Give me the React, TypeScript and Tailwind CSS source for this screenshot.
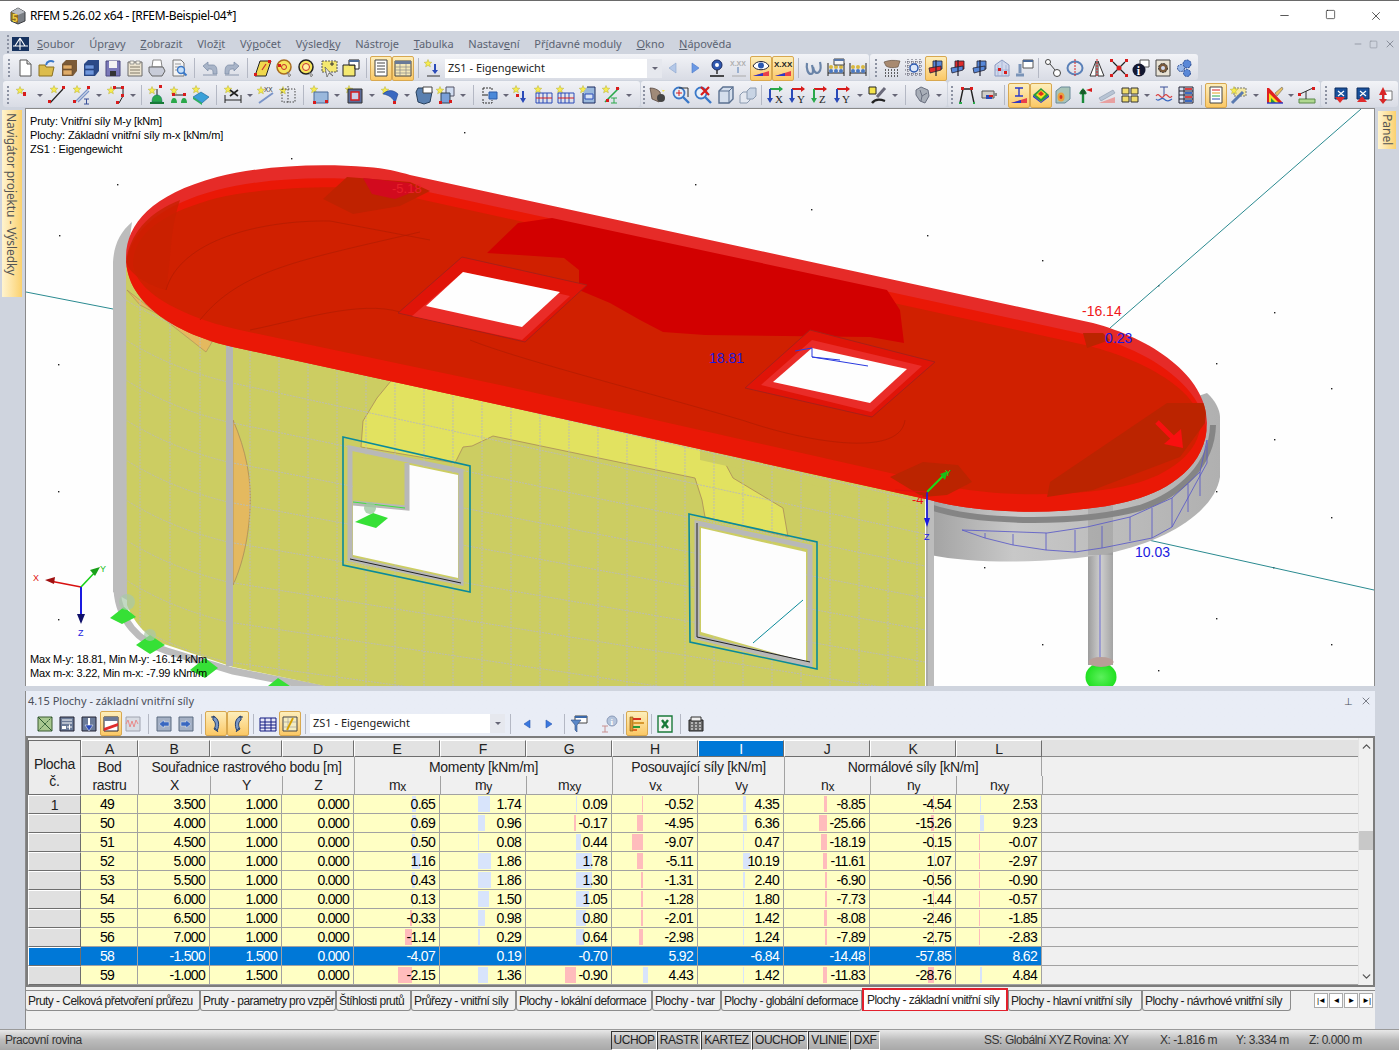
import type { ReactNode } from "react";
import { Minus, Square, X, ChevronUp, ChevronDown } from "lucide-react";

const star = (x = 0, y = 0) => (
  <path
    transform={`translate(${x} ${y})`}
    d="M4 .5l1 2.6 2.8.2-2.1 1.8.7 2.7L4 6.4 1.6 7.8l.7-2.7L.2 3.3 3 3.1z"
    fill="#f7ec4e"
    stroke="#b5ae3a"
    strokeWidth=".5"
  />
);
const dot = (x: number, y: number, c = "#d81c1c") => <rect x={x} y={y} width="3" height="3" fill={c} />;
const abacus = (
  <>
    <path d="M2 5v13M18 5v13M2 15h16" stroke="#222" fill="none" />
    <circle cx="5" cy="13" r="2" fill="#4a78c0" />
    <circle cx="10" cy="13" r="2" fill="#4a78c0" />
    <circle cx="15" cy="13" r="2" fill="#4a78c0" />
    <circle cx="5" cy="9" r="2" fill="#d8b840" />
    <circle cx="10" cy="9" r="2" fill="#d8b840" />
    <circle cx="15" cy="9" r="2" fill="#d8b840" />
  </>
);
const bluePlaneRed = (
  <>
    <path d="M2 18l16-5v5z" fill="#e8404a" />
    <path d="M2 18l10-3v3z" fill="#2a3ac8" />
  </>
);
const cross = (c1: string, c2: string) => (
  <>
    <path d="M7 3h9v8l-9 1z" fill={c1} stroke="#223" strokeWidth=".8" />
    <path d="M3 10l12-2v4L4 15z" fill={c2} stroke="#223" strokeWidth=".8" />
    <path d="M10 2v16" stroke="#223" strokeWidth="1.2" />
  </>
);
const magnifier = (
  <>
    <circle cx="8" cy="8" r="5.5" fill="#e8f0f8" stroke="#3a78c8" strokeWidth="1.8" />
    <path d="M12 12l6 6" stroke="#3a78c8" strokeWidth="2.4" />
  </>
);
const axis = (a: string, b: string, label: string) => (
  <>
    <path d="M4 4h12" stroke={a} strokeWidth="2" />
    <path d="M13 1l4 3-4 3z" fill={a} />
    <path d="M4 4v12" stroke={b} strokeWidth="2" />
    <path d="M1 13l3 5 3-5z" fill={b} />
    <text x="9" y="18" fontSize="11" fontFamily="Liberation Serif" fill="#222">
      {label}
    </text>
  </>
);
const boxArrow = (up: boolean) => (
  <>
    <path d="M4 3h12v11H4z" fill="#18509c" stroke="#0c2c60" />
    <path d="M7 6l6 5M13 6l-6 5" stroke="#fff" strokeWidth="1.2" />
    <path d={up ? "M9 11l-5 6h10z" : "M4 12h10l-5 6z"} fill="#e02c2c" />
  </>
);

const icons: Record<string, ReactNode> = {
  new: (
    <>
      <path d="M5 2h7l4 4v12H5z" fill="#fff" stroke="#555" />
      <path d="M12 2v4h4" fill="#ddd" stroke="#555" />
    </>
  ),
  open: (
    <>
      <path d="M2 7h6l1 2h8l-2 9H2z" fill="#dcbc4c" stroke="#8a7020" />
      <path d="M9 7c1-4 5-5 8-3" stroke="#3a78c8" fill="none" strokeWidth="2" />
    </>
  ),
  cabT: (
    <>
      <path d="M3 6l4-4h11v11l-4 5H3z" fill="#7a5a38" />
      <path d="M4 7h9v4H4zM4 12h9v5H4z" fill="#e0ac68" stroke="#6a4a28" strokeWidth=".6" />
    </>
  ),
  cabB: (
    <>
      <path d="M3 6l4-4h11v11l-4 5H3z" fill="#2c4a88" />
      <path d="M4 7h9v4H4zM4 12h9v5H4z" fill="#6e96dc" stroke="#223c78" strokeWidth=".6" />
    </>
  ),
  save: (
    <>
      <path d="M3 3h14v15H3z" fill="#7a78b8" stroke="#4a4880" />
      <path d="M6 3h8v7H6z" fill="#f2f2f2" />
      <path d="M7 13h6v5H7z" fill="#333" />
    </>
  ),
  notes: (
    <>
      <path d="M3 4h14v14H3z" fill="#ece4d0" stroke="#6a6a6a" />
      <path d="M5 3h4v3H5zM11 3h4v3h-4z" fill="#f8f4e8" stroke="#777" strokeWidth=".7" />
      <path d="M5 9h10M5 12h10M5 15h10" stroke="#807868" />
    </>
  ),
  print: (
    <>
      <path d="M6 2h8l1 7H5z" fill="#fff" stroke="#888" />
      <path d="M2 9h14l2 4-3 5H5l-3-4z" fill="#c8ccd8" stroke="#666" />
    </>
  ),
  preview: (
    <>
      <path d="M4 2h8l3 3v13H4z" fill="#f4f4f4" stroke="#777" />
      <path d="M6 6h6M6 9h6M6 12h3" stroke="#999" />
      <circle cx="12" cy="12" r="3.5" fill="#c8e0f8" stroke="#3a78c8" strokeWidth="1.4" />
      <path d="M14.5 14.5l3 3" stroke="#3a78c8" strokeWidth="2" />
    </>
  ),
  undo: (
    <>
      <path d="M3 8l5-4v3h5c3 0 4 3 4 7v2h-4v-2c0-2-1-3-3-3H8v2z" fill="#a8b4c8" stroke="#7a8aa4" strokeWidth=".7" />
      <path d="M3 17h14" stroke="#8a96ac" />
    </>
  ),
  redo: (
    <>
      <path d="M17 8l-5-4v3H7c-3 0-4 3-4 7v2h4v-2c0-2 1-3 3-3h2v2z" fill="#a8b4c8" stroke="#7a8aa4" strokeWidth=".7" />
      <path d="M3 17h14" stroke="#8a96ac" />
    </>
  ),
  plane: (
    <>
      <path d="M7 3h11l-5 15H2z" fill="#f0d84c" stroke="#222" />
      {dot(1, 15)}
      {dot(15, 2)}
      <path d="M9 12l4-6" stroke="#c83030" strokeWidth="1.2" />
    </>
  ),
  view1: (
    <>
      <circle cx="9" cy="9" r="7" fill="#f6e45c" stroke="#a86c20" strokeWidth="1.5" />
      <circle cx="9" cy="9" r="2.5" fill="none" stroke="#c83030" />
      <path d="M12 14l2 5 2-2z" fill="#bbb" stroke="#666" strokeWidth=".6" />
      {dot(3, 6)}
    </>
  ),
  view2: (
    <>
      <circle cx="9" cy="9" r="7" fill="#f6e45c" stroke="#222" strokeWidth="1.5" />
      <circle cx="9" cy="9" r="3.5" fill="#fff0a0" stroke="#c83030" />
      <path d="M12 14l2 5 2-2z" fill="#bbb" stroke="#666" strokeWidth=".6" />
    </>
  ),
  sel: (
    <>
      <path d="M3 3h15v11H3z" fill="#f4e870" stroke="#555" strokeDasharray="2 1" />
      <path d="M6 9l2 10 2-4 4 3z" fill="#eee" stroke="#555" strokeWidth=".7" />
      <path d="M11 6h4M13 4v4" stroke="#333" />
    </>
  ),
  wins: (
    <>
      <path d="M2 7h12v11H2z" fill="#f4e870" stroke="#222" />
      <path d="M8 2h10v9h-4V7H8z" fill="#fff" stroke="#222" />
      <path d="M8 2h10v2H8z" fill="#4a6a98" />
    </>
  ),
  list: (
    <>
      <path d="M4 2h12v16H4z" fill="#fff" stroke="#444" />
      <path d="M6 5h8M6 8h8M6 11h8M6 14h8" stroke="#444" />
    </>
  ),
  table: (
    <>
      <path d="M2 3h16v15H2z" fill="#f4e8b8" stroke="#444" />
      <path d="M2 3h16v3H2z" fill="#6a7a98" />
      <path d="M2 9h16M2 12h16M2 15h16M7 6v12M13 6v12" stroke="#888" strokeWidth=".7" />
    </>
  ),
  load: (
    <>
      {star(1, 1)}
      <path d="M12 6v8" stroke="#2a4ab8" strokeWidth="2" />
      <path d="M9 12l3 4 3-4z" fill="#2a4ab8" />
      <path d="M4 18h13" stroke="#333" />
    </>
  ),
  arrL: <path d="M13 5v10l-7-5z" fill="#b4c8e8" stroke="#8aa4cc" strokeWidth=".6" />,
  arrR: <path d="M7 5v10l7-5z" fill="#6a98e4" stroke="#4a78c8" strokeWidth=".6" />,
  tArrL: <path d="M13 6v8l-6-4z" fill="#3a78e0" stroke="#2a58b0" strokeWidth=".6" />,
  tArrR: <path d="M7 6v8l6-4z" fill="#3a78e0" stroke="#2a58b0" strokeWidth=".6" />,
  pin: (
    <>
      <circle cx="10" cy="7" r="5" fill="#3058b0" stroke="#1a2a60" />
      <circle cx="10" cy="7" r="2" fill="#fff" />
      <path d="M10 12v4" stroke="#222" strokeWidth="1.4" />
      <path d="M3 18h14" stroke="#222" strokeWidth="1.6" />
    </>
  ),
  xx: (
    <>
      <text x="1" y="8" fontSize="7" fontFamily="Liberation Sans" fontWeight="700" fill="#b0b0b0">
        X.XX
      </text>
      <path d="M9 9v6" stroke="#9ab0d0" strokeWidth="2" />
      <path d="M3 18h14" stroke="#aaa" />
    </>
  ),
  eye: (
    <>
      <path d="M2 8c3-6 13-6 16 0-3 5-13 5-16 0z" fill="#fff" stroke="#223" />
      <circle cx="10" cy="7.5" r="3" fill="#2a58b0" />
      {bluePlaneRed}
    </>
  ),
  xxh: (
    <>
      <text x="1" y="9" fontSize="8" fontFamily="Liberation Sans" fontWeight="700" fill="#222">
        X.XX
      </text>
      {bluePlaneRed}
    </>
  ),
  chain: (
    <path
      d="M3 5c-1 6 1 11 4 11s2-5 1-9M9 9c1 6 4 7 6 5s2-6 1-10"
      fill="none"
      stroke="#6a84a8"
      strokeWidth="2.2"
    />
  ),
  ab1: (
    <>
      {abacus}
      <path d="M8 1h10v6H8z" fill="#f4f4f4" stroke="#444" />
      <path d="M8 1h10v2H8z" fill="#5a78a8" />
    </>
  ),
  ab2: abacus,
  hand: (
    <>
      <path d="M2 4c5-2 10-2 16-1l-2 6c-5 1-9 1-12-1z" fill="#a88a70" stroke="#5a4a3a" strokeWidth=".6" />
      <path d="M3 12h1M6 12h1M9 12h1M12 12h1M15 12h1M3 15h1M6 15h1M9 15h1M12 15h1M15 15h1M3 18h1M6 18h1M9 18h1M12 18h1M15 18h1" stroke="#333" strokeWidth="1.4" />
    </>
  ),
  gridT: (
    <>
      <path d="M1 4h18M1 8h18M1 12h18M1 16h18M4 1v18M8 1v18M12 1v18M16 1v18" stroke="#334" strokeWidth=".8" strokeDasharray="1 1" />
      <circle cx="10" cy="10" r="4" fill="#dce8fa" stroke="#2a58b0" strokeWidth="1.4" />
    </>
  ),
  crossA: cross("#5888d8", "#e02c2c"),
  crossB: cross("#e02c2c", "#5888d8"),
  crossC: cross("#5888d8", "#5888d8"),
  build: (
    <>
      <path d="M3 18V7l7-5 7 5v11z" fill="#d0d8ec" stroke="#8a9ac0" />
      <path d="M3 12h14M10 3v15M6 7v11M14 7v11" stroke="#9aaad0" strokeWidth=".7" />
      {dot(6, 10)}
      {dot(12, 13)}
    </>
  ),
  link: (
    <>
      <path d="M9 2h10v8H9z" fill="#fff" stroke="#555" />
      <path d="M9 2h10v2H9z" fill="#4a6a98" />
      <path d="M6 6v9" stroke="#7a94b8" strokeWidth="3" />
      <path d="M2 17h8" stroke="#7a94b8" strokeWidth="3" />
    </>
  ),
  conn: (
    <>
      <circle cx="5" cy="4" r="2.5" fill="#fff" stroke="#444" />
      <circle cx="14" cy="15" r="3.5" fill="#fff" stroke="#444" />
      <path d="M7 6l5 6" stroke="#444" />
    </>
  ),
  circ: (
    <>
      <ellipse cx="10" cy="10" rx="7.5" ry="6.5" fill="none" stroke="#5a80b8" strokeWidth="2" />
      <path d="M10 1v18" stroke="#d82020" strokeDasharray="2 1" />
    </>
  ),
  tri: (
    <>
      <path d="M9 3L3 18h6zM11 3l6 15h-6z" fill="#fff" stroke="#333" />
      <path d="M10 1v18" stroke="#d82020" strokeDasharray="2 1" />
    </>
  ),
  redx: (
    <>
      <path d="M4 4l12 12M16 4L4 16" stroke="#222" strokeWidth="1.2" />
      <circle cx="10" cy="10" r="2.5" fill="#d81c1c" />
      {dot(1, 1)}
      {dot(16, 1)}
      {dot(1, 16)}
      {dot(16, 16)}
    </>
  ),
  info: (
    <>
      <path d="M9 2h9v7H9z" fill="#fff" stroke="#555" />
      <circle cx="8" cy="12" r="6.5" fill="#141830" />
      <text x="5.8" y="17" fontSize="12" fontFamily="Liberation Serif" fontWeight="700" fill="#fff">
        i
      </text>
    </>
  ),
  gearbox: (
    <>
      <path d="M3 2h14v16H3z" fill="#e8e2d4" stroke="#444" />
      <circle cx="10" cy="10" r="4.5" fill="#7a5a3a" stroke="#333" strokeDasharray="2 1" />
      <circle cx="10" cy="10" r="2" fill="#d0d8ec" />
    </>
  ),
  gears: (
    <>
      <circle cx="12" cy="6" r="4" fill="#5a88d8" stroke="#2a4a90" strokeDasharray="2 1" />
      <circle cx="6" cy="10" r="3.5" fill="#9ab8e8" stroke="#2a4a90" strokeDasharray="2 1" />
      <circle cx="12" cy="15" r="3.5" fill="#5a88d8" stroke="#2a4a90" strokeDasharray="2 1" />
    </>
  ),
  node: (
    <>
      {star(3, 1)}
      {dot(10, 7)}
      <path d="M10 8h3v3h-3z" fill="#d81c1c" />
    </>
  ),
  line: (
    <>
      {star(3, 0)}
      <path d="M3 18L16 4" stroke="#222" strokeWidth="1.2" />
      {dot(1, 15)}
      {dot(15, 1)}
    </>
  ),
  lineI: (
    <>
      {star(1, 0)}
      <path d="M3 17L17 3M6 17L17 6" stroke="#7a94c8" strokeWidth="1.2" />
      {dot(1, 15)}
      {dot(15, 1)}
      <path d="M12 14h5M14.5 14v5M12 19h5" stroke="#3a5098" />
    </>
  ),
  poly: (
    <>
      {star(1, 1)}
      <path d="M7 3h10v8l-4 7" fill="none" stroke="#222" />
      {dot(7, 1)}
      {dot(15, 1)}
      {dot(15, 9)}
      {dot(10, 16)}
    </>
  ),
  sup: (
    <>
      {star(1, 1)}
      {dot(12, 0)}
      <path d="M10 4v6" stroke="#222" />
      <path d="M5 17c0-5 2-7 5-7s5 2 5 7z" fill="#2aa84a" stroke="#166" strokeWidth=".5" />
      <path d="M3 17h14v2H3z" fill="#187a38" />
    </>
  ),
  nodes2: (
    <>
      {star(1, 1)}
      <path d="M5 10h11" stroke="#222" />
      {dot(3, 8)}
      {dot(14, 8)}
      <path d="M2 18c0-3 1-5 3-5s3 2 3 5zM12 18c0-3 1-5 3-5s3 2 3 5z" fill="#2aa84a" />
    </>
  ),
  surf: (
    <>
      {star(1, 0)}
      <path d="M2 12l8-5 8 5-7 6z" fill="#3aa0d8" stroke="#186090" strokeWidth=".6" />
      <path d="M2 12l9 6v2l-9-6z" fill="#2ab060" />
    </>
  ),
  dim: (
    <>
      {star(1, 0)}
      <path d="M2 10v8M18 10v8M2 15h16" stroke="#222" />
      <path d="M7 5l8 6M15 5l-8 6" stroke="#222" strokeWidth="1.6" />
    </>
  ),
  dimX: (
    <>
      {star(1, 1)}
      <path d="M3 18L17 8" stroke="#7a94c8" strokeWidth="2" />
      <text x="8" y="7" fontSize="6.5" fontFamily="Liberation Sans" fill="#333">
        XX
      </text>
    </>
  ),
  dimD: (
    <>
      {star(1, 1)}
      <path d="M4 4h13v13H4z" fill="none" stroke="#444" strokeDasharray="1.5 1.5" />
      <path d="M10 1v18" stroke="#444" strokeDasharray="1.5 1.5" />
    </>
  ),
  box: (
    <>
      {star(0, 0)}
      <path d="M4 7h14v11H4z" fill="#9ab8dc" stroke="#4a6a98" />
      {dot(15, 15)}
      {dot(3, 16)}
    </>
  ),
  boxred: (
    <>
      {star(0, 0)}
      <path d="M3 4h14v14H3z" fill="#5a6a98" stroke="#333" />
      <path d="M6 7h8v8H6z" fill="#c8d0e8" stroke="#d81c1c" strokeWidth="1.4" />
    </>
  ),
  curved: (
    <>
      {star(0, 1)}
      <path d="M2 9c5-5 11-4 15 0l-3 9c-2-5-6-8-12-9z" fill="#3a68c0" stroke="#1a3a80" strokeWidth=".5" />
      {dot(12, 16)}
    </>
  ),
  solid: (
    <>
      <path d="M4 3h12l2 4-2 10-6 2-6-2-2-10z" fill="#5a80b0" stroke="#28405c" />
      <path d="M9 2h9v6H9z" fill="#fff" stroke="#444" />
    </>
  ),
  copy: (
    <>
      {star(0, 1)}
      <path d="M10 2h8v9h-8z" fill="#d0dcf0" stroke="#556" />
      <path d="M5 8h9v10H5z" fill="#7aa0d8" stroke="#345" />
      {dot(13, 15)}
      {dot(3, 16)}
    </>
  ),
  arrBox: (
    <>
      <path d="M3 3h9v3M3 3v6M3 14v4h9v-3" fill="none" stroke="#333" strokeDasharray="2 1" />
      <path d="M9 7h8v7H9z" fill="#4a88d8" stroke="#2a5aa8" />
      <path d="M2 10h6" stroke="#222" />
    </>
  ),
  ldown: (
    <>
      {star(1, 0)}
      <path d="M12 6v9" stroke="#2a4ab8" strokeWidth="2" />
      <path d="M9 13l3 5 3-5z" fill="#2a4ab8" />
      {dot(5, 9)}
    </>
  ),
  abS: (
    <>
      {star(0, 0)}
      <path d="M2 8h16v10H2z" fill="none" stroke="#2a4ab8" />
      <path d="M5 8v10M9 8v10M13 8v10" stroke="#2a4ab8" />
      <path d="M2 13h16" stroke="#d81c1c" />
    </>
  ),
  abT: (
    <>
      {star(0, 0)}
      <path d="M8 2h8v16H4V8" fill="#9ab8dc" stroke="#1a2a60" />
      <path d="M6 9h8v5H6z" fill="#d8e4f4" stroke="#2a4ab8" />
    </>
  ),
  yLine: (
    <>
      {star(0, 0)}
      <path d="M3 17L17 3" stroke="#2aa84a" strokeWidth="1.6" />
      {dot(14, 2)}
      {dot(4, 14)}
      <path d="M9 13h6M12 13v5M9 18h6" stroke="#2aa84a" />
    </>
  ),
  hand2: (
    <>
      <path d="M2 3c4 0 7 1 10 4 1 4 1 8-1 10l-7-3z" fill="#a08a78" stroke="#4a3a30" strokeWidth=".7" />
      <circle cx="13" cy="13" r="4" fill="#444" />
      <path d="M13 2l1 3 3 0-2 2 1 3" fill="#f4e44c" />
    </>
  ),
  zoom1: (
    <>
      {magnifier}
      <path d="M8 3h9v9" fill="none" stroke="#333" />
      <path d="M5 8h6M8 5v6" stroke="#d81c1c" />
    </>
  ),
  zoomX: (
    <>
      {magnifier}
      <path d="M8 2l8 8M16 2l-8 8" stroke="#d81c1c" strokeWidth="2.2" />
    </>
  ),
  cube: (
    <>
      <path d="M3 6l4-4h10v12l-4 4H3z" fill="#d4deec" stroke="#5a7090" strokeWidth="1.4" />
      <path d="M3 6h10v12M13 6l4-4" fill="none" stroke="#5a7090" />
    </>
  ),
  cubes: (
    <>
      <path d="M2 10l3-3h7v8l-3 3H2z" fill="#e4e8f0" stroke="#8a9ab0" />
      <path d="M9 6l3-3h6v8l-3 3H9z" fill="#c8d4e4" stroke="#8a9ab0" />
    </>
  ),
  axX: axis("#2aa84a", "#2a4ab8", "X"),
  axY: axis("#d81c1c", "#2a4ab8", "Y"),
  axZ: axis("#d81c1c", "#2aa84a", "Z"),
  axmY: axis("#d81c1c", "#2a4ab8", "Y"),
  micro: (
    <>
      <path d="M1 2h7v7H1z" fill="#f4e44c" stroke="#222" />
      <path d="M17 3L9 12" stroke="#6a6a7a" strokeWidth="3" />
      <path d="M4 18c3-4 8-4 13-2" stroke="#222" strokeWidth="2.4" fill="none" />
    </>
  ),
  shell: (
    <>
      <path d="M4 5l5-3 7 3 1 6-4 7-5-2-4-6z" fill="#a8aeb8" stroke="#6a7080" />
      <path d="M8 5l2 6 5-3M10 11l-1 5" stroke="#6a7080" fill="none" />
    </>
  ),
  frame: (
    <>
      <path d="M3 18L6 4h8l3 14" fill="none" stroke="#222" strokeWidth="1.4" />
      {dot(4, 2)}
      {dot(13, 2)}
      <path d="M2 18h3M16 18h2" stroke="#2aa84a" strokeWidth="2" />
    </>
  ),
  tape: (
    <>
      <path d="M3 6h12v7H3z" fill="#d0cec8" stroke="#555" />
      <path d="M7 10h6v4H7z" fill="#2a4ab8" />
      <path d="M10 10h4v2h-4z" fill="#d81c1c" />
      <path d="M15 8h3v3h-3z" fill="#888" />
    </>
  ),
  hlI: (
    <>
      <path d="M6 3h8M10 3v8M6 11h8" stroke="#2a3ac8" strokeWidth="1.4" />
      {bluePlaneRed}
    </>
  ),
  hlRain: (
    <>
      <path d="M2 10l8-7 8 7-8 7z" fill="#2a9a3a" />
      <path d="M5 10l5-5 5 4-5 5z" fill="#f4e020" />
      <path d="M7 9l3-3 3 3-3 2z" fill="#e03020" />
      <path d="M2 10l8 7 8-7v2l-8 6-8-6z" fill="#2a3ac8" />
    </>
  ),
  colorCube: (
    <>
      <path d="M3 6l5-4h9v12l-5 4H3z" fill="#a8c4b8" stroke="#6a8a9a" />
      <ellipse cx="8" cy="12" rx="3.5" ry="4.5" fill="#e8a040" />
      <ellipse cx="8" cy="12" rx="1.5" ry="2" fill="#d83020" />
    </>
  ),
  greenUp: (
    <>
      <path d="M8 18V9M5 9l3-4 3 4" stroke="#1a8a3a" strokeWidth="2.4" fill="#1a8a3a" />
      <circle cx="8" cy="7" r="2.5" fill="#1a5a2a" />
      <path d="M11 5l6-2v4z" fill="#d81c1c" />
    </>
  ),
  plate: (
    <>
      <path d="M2 13L16 5l2 3L4 16z" fill="#b8c4d4" stroke="#8a98ac" strokeWidth=".6" />
      <path d="M2 18l16-6v6z" fill="#e8a0a0" />
    </>
  ),
  four: (
    <>
      <path d="M2 3h7v6H2zM11 3h7v6h-7zM2 11h7v6H2zM11 11h7v6h-7z" fill="#f0dc6c" stroke="#333" />
    </>
  ),
  wave: (
    <>
      <path d="M6 2h8M10 2v9" stroke="#3a5098" />
      <path d="M2 11c3-5 5 5 8 0s5 5 8 0" fill="none" stroke="#d84040" strokeWidth="1.2" />
      <path d="M2 14c3 4 5-3 8 0s5 2 8 0" fill="none" stroke="#3a68c0" strokeWidth="1.2" />
    </>
  ),
  tableB: (
    <>
      <path d="M3 2h14v16H3z" fill="#d8e0f0" stroke="#223" />
      <path d="M3 6h14M3 10h14M3 14h14M8 2v16" stroke="#223" />
      <path d="M9 3h7v2H9zM9 11h7v2H9z" fill="#d84040" />
      <path d="M9 7h7v2H9zM9 15h7v2H9z" fill="#3a68c0" />
    </>
  ),
  hlList: (
    <>
      <path d="M4 2h12v16H4z" fill="#fff" stroke="#444" />
      <path d="M6 5h8" stroke="#d81c1c" />
      <path d="M6 8h8" stroke="#e0a020" />
      <path d="M6 11h8" stroke="#2aa84a" />
      <path d="M6 14h8" stroke="#2a4ab8" />
    </>
  ),
  wand: (
    <>
      <path d="M5 3h12v8H5z" fill="#f4e8a0" stroke="#777" strokeDasharray="2 1" />
      {star(1, 1)}
      <path d="M3 18L14 7" stroke="#5a7ab0" strokeWidth="3" />
    </>
  ),
  rainbow: (
    <>
      <path d="M2 18V3h2l14 15z" fill="#e02020" />
      <path d="M4 18V8l10 10z" fill="#f4e020" />
      <path d="M6 18v-5l5 5z" fill="#2a9a3a" />
      <path d="M2 18h16" stroke="#2a3ac8" strokeWidth="1.4" />
      <path d="M10 8l7-6 1 2-6 7z" fill="#e8c060" stroke="#555" strokeWidth=".5" />
    </>
  ),
  ruler: (
    <>
      <path d="M2 14h16v4H2z" fill="#b0d890" stroke="#5a8a4a" />
      <path d="M3 9l13-6" stroke="#333" />
      {dot(1, 8)}
      {dot(15, 2)}
      <path d="M9 6v8" stroke="#333" />
    </>
  ),
  boxDown: boxArrow(false),
  boxUp: boxArrow(true),
  boxSide: (
    <>
      <path d="M9 6h8v9H9z" fill="#fff" stroke="#777" />
      <path d="M8 2l-4 8h3v4H4l4 5 4-5H9v-4h3z" fill="#d82828" />
    </>
  ),
  grid1: (
    <>
      <path d="M3 3h14v14H3z" fill="#a8c890" stroke="#3a5a30" />
      <path d="M3 3l14 14" stroke="#2a5a30" />
      <path d="M3 17L17 3" stroke="#2a5a30" strokeDasharray="2 1" />
    </>
  ),
  tblStar: (
    <>
      <path d="M3 3h14v14H3z" fill="#6a7a98" stroke="#223" />
      <path d="M5 6h10M5 9h10" stroke="#fff" />
      <path d="M5 12h4v3H5z" fill="#fff" />
      <path d="M10 13h5M12.5 10.5v5" stroke="#fff" />
    </>
  ),
  tblDown: (
    <>
      <path d="M3 3h14v14H3z" fill="#6a7a98" stroke="#223" />
      <path d="M10 4v9" stroke="#fff" strokeWidth="2" />
      <path d="M6 11l4 6 4-6z" fill="#2a4ab8" stroke="#fff" strokeWidth=".5" />
    </>
  ),
  tblGrad: (
    <>
      <path d="M3 3h14v14H3z" fill="#fff" stroke="#223" />
      <path d="M3 3h14v4H3z" fill="#6a7a98" />
      <path d="M3 14l14-5v3L3 17z" fill="#e02c2c" />
    </>
  ),
  tblWave: (
    <>
      <path d="M3 3h14v14H3z" fill="#d8dce4" stroke="#a0a4b0" />
      <path d="M3 10l2-4 2 7 2-6 2 6 2-7 2 4" fill="none" stroke="#e88a8a" />
    </>
  ),
  tblL: (
    <>
      <path d="M3 3h14v14H3z" fill="#a4b0c4" stroke="#5a6a80" />
      <path d="M5 10l5-4v2h5v4h-5v2z" fill="#3a68c0" stroke="#fff" strokeWidth=".4" />
    </>
  ),
  tblR: (
    <>
      <path d="M3 3h14v14H3z" fill="#a4b0c4" stroke="#5a6a80" />
      <path d="M15 10l-5-4v2H5v4h5v2z" fill="#3a68c0" stroke="#fff" strokeWidth=".4" />
    </>
  ),
  bendA: <path d="M7 2c6 2 7 9 4 15l-3-2c2-3 2-7-1-9zM5 3h4M9 14l3 4" fill="#7a98c8" stroke="#26406c" />,
  bendB: <path d="M13 2C7 4 6 11 9 17l3-2c-2-3-2-7 1-9zM15 3h-4M11 14l-3 4" fill="#7a98c8" stroke="#26406c" />,
  tblBlue: (
    <>
      <path d="M2 4h16v13H2z" fill="#e8e8f8" stroke="#101880" />
      <path d="M2 8h16M2 11h16M2 14h16M7 4v13M13 4v13" stroke="#101880" />
    </>
  ),
  tblWand: (
    <>
      <path d="M3 3h14v14H3z" fill="#f4ecc0" stroke="#444" />
      <path d="M3 8h14M3 13h14M8 3v14" stroke="#999" strokeWidth=".6" />
      <path d="M7 16l6-12" stroke="#d8a000" strokeWidth="1.8" />
    </>
  ),
  funnel: (
    <>
      <path d="M6 2h12v7H6z" fill="#fff" stroke="#444" />
      <path d="M6 2h12v2H6z" fill="#3a68a8" />
      <path d="M2 6h10l-4 5v7l-2-2v-5z" fill="#5a88c8" stroke="#2a4a80" strokeWidth=".6" />
    </>
  ),
  mInfo: (
    <>
      <circle cx="12" cy="7" r="5" fill="#b4c4dc" stroke="#8a9ab8" />
      <text x="10.4" y="10.5" fontSize="9" fontFamily="Liberation Serif" fontWeight="700" fill="#fff">
        i
      </text>
      <path d="M2 12h6M5 12v6M2 18h6" stroke="#c89090" />
    </>
  ),
  bars: (
    <>
      <path d="M3 3h3v14H3z" fill="#d89830" stroke="#805010" strokeWidth=".6" />
      <path d="M6 4h8v2H6z" fill="#d83020" />
      <path d="M6 8h11v2H6z" fill="#d89830" />
      <path d="M6 12h7v2H6z" fill="#2a9a3a" />
      <path d="M6 15h4v2H6z" fill="#e06a20" />
    </>
  ),
  excel: (
    <>
      <path d="M3 2h14v16H3z" fill="#f4f4f4" stroke="#1a7a3a" strokeWidth="1.4" />
      <path d="M7 6l6 8M13 6l-6 8" stroke="#1a7a3a" strokeWidth="2.4" />
    </>
  ),
  calc: (
    <>
      <path d="M3 6h14v11H3z" fill="#6a6a6a" stroke="#222" />
      <path d="M5 3h10v4H5z" fill="#eee" stroke="#333" />
      <path d="M5 9h2M9 9h2M13 9h2M5 12h2M9 12h2M13 12h2M5 15h2M9 15h2M13 15h2" stroke="#fff" />
    </>
  ),
};

const Ic = ({ n, hl }: { n: string; hl?: boolean }) => (
  <span
    className={
      "flex h-[25px] w-[22px] shrink-0 items-center justify-center rounded-[2px] " +
      (hl ? "border border-[#d8a850] bg-gradient-to-b from-[#fdeeba] to-[#fbc864]" : "")
    }
  >
    <svg width="20" height="20" viewBox="0 0 20 20">
      {icons[n]}
    </svg>
  </span>
);

// little drop arrow next to an icon
const Dd = ({ w = "w-[12px]" }: { w?: string }) => (
  <span className={"flex shrink-0 items-center justify-center " + w}>
    <span className="h-0 w-0 border-x-[3px] border-t-[3px] border-x-transparent border-t-[#667]" />
  </span>
);

const Sep = ({ w = "w-[9px]" }: { w?: string }) => (
  <span className={"flex shrink-0 justify-center " + w}>
    <span className="h-[20px] w-px bg-[#b4b8c4]" />
  </span>
);

const Grip = ({ w = "w-[11px]" }: { w?: string }) => (
  <span className={"flex shrink-0 flex-col items-center justify-center gap-[2px] " + w}>
    {[0, 1, 2, 3, 4].map((i) => (
      <span key={i} className="h-[2px] w-[2px] bg-[#8c92a2]" />
    ))}
  </span>
);

const Gap = ({ w }: { w: string }) => <span className={"shrink-0 " + w} />;

const Group = ({ children, w }: { children: ReactNode; w: string }) => (
  <div className={"flex h-[26px] shrink-0 items-center rounded-[3px] bg-gradient-to-b from-[#f2f3f7] to-[#d9dce5] pt-[2px] " + w}>
    {children}
  </div>
);

const Combo = ({ w, label }: { w: string; label: string }) => (
  <div className={"flex h-[19px] shrink-0 items-center justify-between bg-white pl-[3px] text-[11px] text-[#222] [font-family:'Noto_Sans',sans-serif] " + w}>
    <span>{label}</span>
    <span className="flex h-full w-[15px] items-center justify-center bg-[#e6e8ee]">
      <span className="h-0 w-0 border-x-[3px] border-t-[3px] border-x-transparent border-t-[#667]" />
    </span>
  </div>
);

const menu = ["_Soubor", "Úpr_avy", "_Zobrazit", "Vlož_it", "Vý_počet", "Výsled_ky", "Nástro_je", "_Tabulka", "Nastav_ení", "Př_ídavné moduly", "_Okno", "_Nápověda"];

const MenuItem = ({ t }: { t: string }) => {
  const [a, b] = t.split("_");
  return (
    <span className="mr-[14.7px] whitespace-pre">
      {a}
      <u>{b[0]}</u>
      {b.slice(1)}
    </span>
  );
};

const Row1 = () => (
  <div className="flex h-[27px] shrink-0 gap-[1px] pl-[3px]">
    <Group w="w-[866px]">
      <Grip />
      <Ic n="new" />
      <Ic n="open" />
      <Ic n="cabT" />
      <Ic n="cabB" />
      <Ic n="save" />
      <Ic n="notes" />
      <Ic n="print" />
      <Ic n="preview" />
      <Sep />
      <Ic n="undo" />
      <Ic n="redo" />
      <Sep />
      <Ic n="plane" />
      <Ic n="view1" />
      <Ic n="view2" />
      <Ic n="sel" />
      <Ic n="wins" />
      <Sep w="w-[8px]" />
      <Ic n="list" hl />
      <Ic n="table" hl />
      <Sep w="w-[8px]" />
      <Ic n="load" />
      <Gap w="w-px" />
      <Combo w="w-[217px]" label="ZS1 - Eigengewicht" />
      <Ic n="arrL" />
      <Ic n="arrR" />
      <Ic n="pin" />
      <Ic n="xx" />
      <Ic n="eye" hl />
      <Ic n="xxh" hl />
      <Sep />
      <Ic n="chain" />
      <Ic n="ab1" />
      <Ic n="ab2" />
    </Group>
    <Group w="w-[328px]">
      <Grip />
      <Ic n="hand" />
      <Ic n="gridT" />
      <Ic n="crossA" hl />
      <Ic n="crossB" />
      <Ic n="crossC" />
      <Ic n="build" />
      <Ic n="link" />
      <Sep w="w-[7px]" />
      <Ic n="conn" />
      <Ic n="circ" />
      <Ic n="tri" />
      <Ic n="redx" />
      <Ic n="info" />
      <Ic n="gearbox" />
      <Ic n="gears" />
    </Group>
  </div>
);

const Row2 = () => (
  <div className="flex h-[27px] shrink-0 gap-[1px] pl-[3px]">
    <Group w="w-[637px]">
      <Grip w="w-[9px]" />
      <Ic n="node" />
      <Dd />
      <Ic n="line" />
      <Gap w="w-[3px]" />
      <Ic n="lineI" />
      <Dd />
      <Ic n="poly" />
      <Dd w="w-[11px]" />
      <Sep w="w-[7px]" />
      <Gap w="w-px" />
      <Ic n="sup" />
      <Ic n="nodes2" />
      <Ic n="surf" />
      <Sep />
      <Gap w="w-px" />
      <Ic n="dim" />
      <Dd w="w-[11px]" />
      <Ic n="dimX" />
      <Ic n="dimD" />
      <Sep w="w-[8px]" />
      <Gap w="w-[2px]" />
      <Ic n="box" />
      <Dd />
      <Gap w="w-px" />
      <Ic n="boxred" />
      <Dd />
      <Gap w="w-[2px]" />
      <Ic n="curved" />
      <Dd w="w-[10px]" />
      <Gap w="w-px" />
      <Ic n="solid" />
      <Ic n="copy" />
      <Dd w="w-[11px]" />
      <Sep w="w-[11px]" />
      <Ic n="arrBox" />
      <Dd w="w-[9px]" />
      <Ic n="ldown" />
      <Gap w="w-px" />
      <Ic n="abS" />
      <Ic n="abS" />
      <Gap w="w-px" />
      <Ic n="abT" />
      <Gap w="w-px" />
      <Ic n="yLine" />
      <Dd />
    </Group>
    <Group w="w-[306px]">
      <Grip w="w-[6px]" />
      <Ic n="hand2" />
      <Gap w="w-px" />
      <Ic n="zoom1" />
      <Ic n="zoomX" />
      <Gap w="w-px" />
      <Ic n="cube" />
      <Ic n="cubes" />
      <Sep w="w-[4px]" />
      <Gap w="w-[2px]" />
      <Ic n="axX" />
      <Ic n="axY" />
      <Ic n="axZ" />
      <Gap w="w-px" />
      <Ic n="axmY" />
      <Dd />
      <Gap w="w-px" />
      <Ic n="micro" />
      <Dd />
      <Sep w="w-[8px]" />
      <Gap w="w-[2px]" />
      <Ic n="shell" />
      <Dd />
    </Group>
    <Group w="w-[372px]">
      <Grip w="w-[8px]" />
      <Ic n="frame" />
      <Ic n="tape" />
      <Sep w="w-[8px]" />
      <Ic n="hlI" hl />
      <Ic n="hlRain" hl />
      <Ic n="colorCube" />
      <Ic n="greenUp" />
      <Ic n="plate" />
      <Gap w="w-px" />
      <Ic n="four" />
      <Dd />
      <Ic n="wave" />
      <Ic n="tableB" />
      <Sep w="w-[8px]" />
      <Ic n="hlList" hl />
      <Gap w="w-px" />
      <Ic n="wand" />
      <Dd />
      <Gap w="w-[2px]" />
      <Ic n="rainbow" />
      <Dd w="w-[10px]" />
      <Ic n="ruler" />
    </Group>
    <Group w="w-[77px]">
      <Grip w="w-[9px]" />
      <Ic n="boxDown" />
      <Ic n="boxUp" />
      <Ic n="boxSide" />
    </Group>
  </div>
);

const TableBar = () => (
  <div className="flex h-[25px] shrink-0 items-center pl-[8px]">
    <Ic n="grid1" />
    <Ic n="tblStar" />
    <Ic n="tblDown" />
    <Ic n="tblGrad" hl />
    <Ic n="tblWave" />
    <Sep w="w-[9px]" />
    <Ic n="tblL" />
    <Ic n="tblR" />
    <Sep w="w-[8px]" />
    <Ic n="bendA" hl />
    <Ic n="bendB" hl />
    <Sep w="w-[8px]" />
    <Ic n="tblBlue" />
    <Ic n="tblWand" hl />
    <Sep w="w-[9px]" />
    <Combo w="w-[195px]" label="ZS1 - Eigengewicht" />
    <Sep w="w-[11px]" />
    <Ic n="tArrL" />
    <Ic n="tArrR" />
    <Sep w="w-[8px]" />
    <Ic n="funnel" />
    <Gap w="w-[9px]" />
    <Ic n="mInfo" />
    <Sep w="w-[5px]" />
    <Ic n="bars" hl />
    <Sep w="w-[6px]" />
    <Ic n="excel" />
    <Sep w="w-[9px]" />
    <Ic n="calc" />
  </div>
);

const rows = [
  ["1", "49", "3.500", "1.000", "0.000", "0.65", "1.74", "0.09", "-0.52", "4.35", "-8.85", "-4.54", "2.53"],
  ["", "50", "4.000", "1.000", "0.000", "0.69", "0.96", "-0.17", "-4.95", "6.36", "-25.66", "-15.26", "9.23"],
  ["", "51", "4.500", "1.000", "0.000", "0.50", "0.08", "0.44", "-9.07", "0.47", "-18.19", "-0.15", "-0.07"],
  ["", "52", "5.000", "1.000", "0.000", "1.16", "1.86", "1.78", "-5.11", "10.19", "-11.61", "1.07", "-2.97"],
  ["", "53", "5.500", "1.000", "0.000", "0.43", "1.86", "1.30", "-1.31", "2.40", "-6.90", "-0.56", "-0.90"],
  ["", "54", "6.000", "1.000", "0.000", "0.13", "1.50", "1.05", "-1.28", "1.80", "-7.73", "-1.44", "-0.57"],
  ["", "55", "6.500", "1.000", "0.000", "-0.33", "0.98", "0.80", "-2.01", "1.42", "-8.08", "-2.46", "-1.85"],
  ["", "56", "7.000", "1.000", "0.000", "-1.14", "0.29", "0.64", "-2.98", "1.24", "-7.89", "-2.75", "-2.83"],
  ["", "58", "-1.500", "1.500", "0.000", "-4.07", "0.19", "-0.70", "5.92", "-6.84", "-14.48", "-57.85", "8.62"],
  ["", "59", "-1.000", "1.500", "0.000", "-2.15", "1.36", "-0.90", "4.43", "1.42", "-11.83", "-28.76", "4.84"],
];

// zero line offset in the cell and px per unit, columns E..L
const barCfg: Record<number, [number, number, number]> = {
  5: [58, 6.5, 14],
  6: [38, 7, 14],
  7: [50, 12, 16],
  8: [31, 1.2, 12],
  9: [45, 0.7, 8],
  10: [43, 0.31, 9],
  11: [64, 0.2, 6],
  12: [24, 0.4, 4],
};

const gridCols = "grid grid-cols-[53px_57px_72px_72px_72px_86px_86px_86px_86px_86px_86px_86px_86px_1fr]";
const letters = ["A", "B", "C", "D", "E", "F", "G", "H", "I", "J", "K", "L"];

const Sub = ({ a, b }: { a: string; b: string }) => (
  <span>
    {a}
    <span className="relative top-[1px] text-[12px]">{b}</span>
  </span>
);

const Cell = ({ c, v, sel }: { c: number; v: string; sel: boolean }) => {
  const cfg = barCfg[c];
  const num = parseFloat(v);
  const w = cfg ? Math.max(1, Math.min(cfg[2], Math.abs(num) * cfg[1])) : 0;
  return (
    <div
      className={
        "relative h-[19px] border-b border-r border-[#a2a2a2] pr-[4px] leading-[19px] tracking-[-0.7px] " +
        (c === 1 ? "text-center " : "text-right ") +
        (sel ? "bg-[#0078d7] text-white" : "bg-[#ffffc4] text-black")
      }
    >
      {cfg && !sel && (
        <span
          className={"absolute bottom-[1px] top-[1px] " + (num < 0 ? "bg-[#ffbcbc]" : "bg-[#d8e4fb]")}
          style={{ left: num < 0 ? cfg[0] - w : cfg[0], width: w }}
        />
      )}
      <span className="relative">{v}</span>
    </div>
  );
};

const bevel = "border-r border-b border-r-[#6e6e6e] border-b-[#6e6e6e] border-t border-l border-t-white border-l-white";

const Grid = () => (
  <div className="relative flex h-[251px] shrink-0 border-2 border-[#7c7c7c] bg-[#f0f0f0] text-[14px] leading-none tracking-[-0.3px] [font-family:'Liberation_Sans',sans-serif]">
    <div className="flex-1 pt-[2px]">
      <div className={gridCols}>
        <div className="row-span-3 flex flex-col items-center border border-[#6e6e6e] bg-[#ececec] pt-[15px] text-[14px] leading-[17px] text-[#222]">
          <span>Plocha</span>
          <span>č.</span>
        </div>
        {letters.map((l) => (
          <div key={l} className={"flex h-[17px] items-center justify-center " + bevel + (l === "I" ? " bg-[#0078d7] text-white" : " bg-[#e2e2e2] text-[#222]")}>
            {l}
          </div>
        ))}
        <div className="h-[17px] border-b border-[#8a8a8a] bg-[#e2e2e2]" />
        <div className="flex h-[19px] items-center justify-center bg-[#f0f0f0]">Bod</div>
        <div className="col-span-3 flex h-[19px] items-center justify-center border-l border-[#a2a2a2] bg-[#f0f0f0]">Souřadnice rastrového bodu [m]</div>
        <div className="col-span-3 flex h-[19px] items-center justify-center border-l border-[#a2a2a2] bg-[#f0f0f0]">Momenty [kNm/m]</div>
        <div className="col-span-2 flex h-[19px] items-center justify-center border-l border-[#a2a2a2] bg-[#f0f0f0]">Posouvající síly [kN/m]</div>
        <div className="col-span-3 flex h-[19px] items-center justify-center border-x border-[#a2a2a2] bg-[#f0f0f0]">Normálové síly [kN/m]</div>
        <div />
        {["rastru", "X", "Y", "Z"].map((t, i) => (
          <div key={t} className={"flex h-[19px] items-center justify-center border-b border-[#a2a2a2] " + (i ? "border-l" : "")}>
            {t}
          </div>
        ))}
        {[
          ["m", "x"],
          ["m", "y"],
          ["m", "xy"],
          ["v", "x"],
          ["v", "y"],
          ["n", "x"],
          ["n", "y"],
          ["n", "xy"],
        ].map(([a, b], i) => (
          <div key={i} className="flex h-[19px] items-center justify-center border-b border-l border-[#a2a2a2]">
            <Sub a={a} b={b} />
          </div>
        ))}
        <div className="border-b border-l border-[#a2a2a2]" />
        {rows.map((row) => {
          const sel = row[1] === "58";
          return (
            <div key={row[1]} className="contents">
              <div className={"flex h-[19px] items-center justify-center text-[#222] " + bevel + (sel ? " bg-[#0078d7]" : " bg-[#e0e0e0]")}>{row[0]}</div>
              {row.slice(1).map((v, c) => (
                <Cell key={c} c={c + 1} v={v} sel={sel} />
              ))}
              <div className="h-[19px] border-b border-[#a2a2a2]" />
            </div>
          );
        })}
      </div>
    </div>
    <div className="flex w-[15px] flex-col items-center justify-between border-l border-[#e4e4e4] py-[2px]">
      <ChevronUp size={13} strokeWidth={2.4} className="text-[#555]" />
      <ChevronDown size={13} strokeWidth={2.4} className="text-[#555]" />
    </div>
    <div className="absolute right-0 top-[93px] h-[19px] w-[14px] bg-[#c8c8c8]" />
  </div>
);

const tabs: [string, string][] = [
  ["Pruty - Celková přetvoření průřezu", "w-[175px]"],
  ["Pruty - parametry pro vzpěr", "w-[136px]"],
  ["Štíhlosti prutů", "w-[75px]"],
  ["Průřezy - vnitřní síly", "w-[105px]"],
  ["Plochy - lokální deformace", "w-[136px]"],
  ["Plochy - tvar", "w-[69px]"],
  ["Plochy - globální deformace", "w-[141px]"],
  ["Plochy - základní vnitřní síly", "w-[146px]"],
  ["Plochy - hlavní vnitřní síly", "w-[134px]"],
  ["Plochy - návrhové vnitřní síly", "w-[149px]"],
];

const Tabs = () => (
  <div className="shrink-0 bg-[#f0f0f0] pt-[3px]">
    <div className="-ml-px flex h-[21px] items-start border-t border-[#8c8c8c] text-[12px] tracking-[-0.55px] text-[#222] [font-family:'Liberation_Sans',sans-serif]">
      {tabs.map(([t, w]) =>
        t.includes("základní") ? (
          <span key={t} className={"-mt-[3px] flex h-[24px] shrink-0 items-center justify-start whitespace-nowrap border-[2px] border-[#e2202c] bg-white pl-[3px] " + w}>
            {t}
          </span>
        ) : (
          <span key={t} className={"flex h-[20px] shrink-0 items-center justify-start whitespace-nowrap rounded-b-[3px] border-x border-b border-[#8c8c8c] pl-[2px] " + w}>
            {t}
          </span>
        ),
      )}
      <div className="ml-[23px] flex items-center gap-px pt-[2px]">
        {["|◄", "◄", "►", "►|"].map((t) => (
          <span key={t} className="flex h-[15px] w-[14px] items-center justify-center border border-[#aaa] bg-white text-[8px] leading-none tracking-[-1px] text-black">
            {t}
          </span>
        ))}
      </div>
    </div>
  </div>
);

const Window = ({ teal, hole, frame }: { teal: string; hole: string; frame: string }) => (
  <>
    <polygon points={hole} fill="#fdfdfd" />
    <polygon points={frame} fill="none" stroke="#b8b8b8" strokeWidth="5" />
    <polygon points={teal} fill="none" stroke="#0a8a9a" strokeWidth="1.6" />
  </>
);

const dots = [[464, 132], [291, 158], [117, 184], [59, 235], [58, 364], [58, 491], [58, 619], [1274, 312], [1216, 363], [1331, 388], [1274, 439], [1216, 491], [1331, 517], [984, 567], [1273, 567], [1216, 618], [1331, 644], [1042, 644], [1158, 670], [695, 184], [811, 209], [927, 235], [1042, 260], [1158, 285]];

const wallLines = [300, 340, 380, 420, 460, 500, 540, 580, 620];
const wallCols = Array.from({ length: 24 }, (_, i) => 250 + i * 29);

const Scene = () => (
  <svg className="absolute inset-0 h-full w-full" viewBox="26 109 1348 577">
    <defs>
      <linearGradient id="col" x1="0" x2="1" y1="0" y2="0">
        <stop offset="0" stopColor="#9c9c9c" />
        <stop offset=".5" stopColor="#cfcfcf" />
        <stop offset="1" stopColor="#a4a4a4" />
      </linearGradient>
      <linearGradient id="beam" x1="0" x2="1" y1="0" y2="0">
        <stop offset="0" stopColor="#a0a0a0" />
        <stop offset=".3" stopColor="#c8c8c8" />
        <stop offset=".65" stopColor="#bcbcbc" />
        <stop offset="1" stopColor="#b0b0b0" />
      </linearGradient>
      <radialGradient id="ball">
        <stop offset="0" stopColor="#5cf05c" />
        <stop offset="1" stopColor="#20e020" />
      </radialGradient>
      <clipPath id="wall">
        <path d="M126,258 L127,605 C135,625 150,640 167,645 L233,667 L345,690 L925,690 L925,495 L233,340 C180,325 126,305 126,258Z" />
      </clipPath>
      <clipPath id="slab">
        <path d="M126,258 C126,225 150,195 217,177 C260,166 317,163 367,167 C385,168 400,172 410,175 L1093,323 C1150,338 1207,375 1207,423 C1207,465 1170,490 1133,500 C1080,516 980,515 930,500 L500,405 L233,347 C180,335 126,305 126,258Z" />
      </clipPath>
    </defs>

    {dots.map(([x, y]) => (
      <rect key={x + "-" + y} x={x} y={y} width="1.4" height="1.4" fill="#222" />
    ))}

    <path d="M26,292 L113,309" stroke="#2a8a90" />
    <path d="M1361,109 L1110,328" stroke="#2a8a90" />
    <path d="M1013,510 L1374,590" stroke="#2a8a90" />

    {/* column and support */}
    <rect x="1088" y="500" width="25" height="165" fill="url(#col)" />
    <path d="M1100,500V660" stroke="#6a6ad0" />
    <ellipse cx="1101" cy="677" rx="15.5" ry="14" fill="url(#ball)" />
    <ellipse cx="1101" cy="662" rx="12.5" ry="5" fill="#b89e98" />

    {/* ring beam */}
    <path d="M925,490 L1207,393 C1215,400 1220,410 1220,417 L1220,477 C1215,510 1170,540 1110,553 C1060,563 980,565 930,555Z" fill="url(#beam)" />
    <rect x="1088" y="505" width="25" height="50" fill="#8c8c8c" opacity=".35" />
    <path d="M930,507 C980,524 1080,524 1140,508 C1180,495 1212,465 1213,425" fill="none" stroke="#858585" strokeWidth="6" />
    <path
      d="M962,530 L1047,533 L1087,527 L1130,517 L1172,498 L1200,472 L1207,440 L1207,463 L1172,527 L1152,538 L1102,548 L1075,552 L1046,550 L1013,545 L985,538Z M985,533V538 M1013,534V545 M1046,533V550 M1075,530V552 M1102,526V548 M1130,517V541 M1152,508V538 M1172,498V527 M1188,484V512 M1200,472V496"
      fill="none"
      stroke="#5a5ac8"
      strokeWidth="1"
      opacity=".85"
    />

    {/* wall */}
    <path d="M113,262 C114,245 120,232 132,222 L127,258 L127,600 L113,592Z" fill="#bcbcbc" />
    <path d="M117,590 C119,620 138,642 167,651 L233,671 L345,693" fill="none" stroke="#bcbcbc" strokeWidth="7" />
    <g clipPath="url(#wall)">
      <rect x="120" y="250" width="810" height="445" fill="#cccd62" />
      <path d="M377,398 L363,421 L361,447 L455,463 L463,447 L472,446 L493,436 L695,478 L702,500 L705,517 L788,537 L783,508 L733,478 L718,450 L600,400 L400,370Z" fill="#e2e260" stroke="#a98a5a" strokeWidth=".8" />
      <path d="M700,460 L925,510 L925,495 L700,440Z" fill="#cccd62" />
      <path d="M127,290 L206,352 L212,342 L140,305Z" fill="#e4b95f" stroke="#a98a5a" strokeWidth=".6" />
      <path d="M233,420 C246,450 252,480 250,510 C248,545 240,570 233,585Z" fill="#e4b95f" stroke="#a98a5a" strokeWidth=".8" />
      {wallCols.map((x) => (
        <path key={x} d={`M${x},300V690`} stroke="#bdbdb0" strokeDasharray="2 1" />
      ))}
      {[140, 170, 200].map((x) => (
        <path key={x} d={`M${x},300V690`} stroke="#bdbdb0" strokeDasharray="2 1" />
      ))}
      {wallLines.map((y, i) => (
        <path
          key={y}
          d={`M126,${y} Q170,${y + 28} 228,${y + 42} L925,${y + 42 + 160 - i * 8}`}
          fill="none"
          stroke="#bdbdb0"
          strokeDasharray="2 1"
        />
      ))}
    </g>
    <path d="M226,340 H233 V666 H226Z" fill="#b4b4b4" />
    <path d="M927,495 V690" stroke="#555" />
    <rect x="928" y="500" width="6" height="190" fill="#bcbcbc" />

    {/* openings */}
    <Window
      teal="343,437 470,466 470,592 343,565"
      hole="353,453 458,475 458,578 353,555"
      frame="350,448 461,471 461,583 350,559"
    />
    <polygon points="353,452 407,463 407,507 353,503" fill="#cccd62" />
    <path d="M407,463V508 L353,503" fill="none" stroke="#b8b8b8" strokeWidth="5" />
    <path d="M353,502 L405,508" stroke="#40e040" />
    <polygon points="355,522 373,513 388,518 376,528" fill="#36e036" />
    <circle cx="370" cy="508" r="6" fill="#9ec8a0" opacity=".8" />
    <path d="M350,559 L461,583" stroke="#222" />
    <Window
      teal="689,514 817,542 817,669 690,642"
      hole="701,528 806,552 806,662 701,632"
      frame="697,523 810,547 810,665 697,637"
    />
    <path d="M803,600 L753,643" stroke="#0a8a9a" />
    <path d="M697,523 V637 L810,662" fill="none" stroke="#222" />

    {/* supports along the bottom */}
    <polygon points="110,618 124,607 136,617 122,624" fill="#36e036" />
    <polygon points="136,645 150,635 165,645 150,654" fill="#36e036" />
    <polygon points="190,670 205,658 218,668 205,678" fill="#36e036" />
    <polygon points="268,686 278,678 290,686" fill="#36e036" />
    <circle cx="127" cy="602" r="8" fill="#a8c8a8" opacity=".7" />
    <circle cx="150" cy="635" r="6" fill="#a8c8a8" opacity=".7" />

    {/* slab */}
    <g clipPath="url(#slab)">
      <rect x="100" y="140" width="1120" height="400" fill="#e62b28" />
      <path
        transform="translate(0 13)"
        d="M126,258 C126,225 150,195 217,177 C260,166 317,163 367,167 C385,168 400,172 410,175 L1093,323 C1150,338 1207,375 1207,423 C1207,475 1170,510 1133,520 C1080,536 980,535 930,520 L500,425 L233,367 C180,355 126,325 126,258Z"
        fill="#ea1806"
      />
      <path
        d="M133,262 C135,232 165,212 217,198 C260,188 320,186 367,188 C385,189 400,192 410,197 L1085,345 C1140,358 1195,388 1200,420 C1203,450 1170,475 1133,484 C1080,498 985,498 930,482 L500,385 L240,330 C185,318 133,292 133,262Z"
        fill="#d02000"
      />
      <path d="M126,262 C130,232 150,212 180,200 C170,230 172,250 166,290 C148,285 130,275 126,262Z" fill="#c82000" opacity=".8" />
      <path d="M487,253 L518,223 L552,218 L887,290 L900,310 L904,343 L870,337 L705,335 L663,332 L640,320 L610,303 L579,290 L579,270 L564,258Z" fill="#d20000" />
      <path d="M323,199 L347,177 L410,182 L430,191 L400,206 L353,214Z" fill="#bf2200" />
      <path d="M363,178 L410,183 L418,190 L395,199 L372,194Z" fill="#d20a1e" />
      <path d="M1167,403 L1207,403 L1205,423 L1180,457 L1093,490 L1047,497 L1050,482Z" fill="#bb2400" />
      <path d="M890,477 L923,462 L958,465 L972,482 L947,495 L923,497Z" fill="#bb2400" />
      <path d="M1083,333 L1103,333 L1110,340 L1087,348Z" fill="#bb2400" />
      <path d="M166,290 C180,240 260,220 330,221 L430,240 M200,320 C240,270 300,260 420,232 M250,330 C300,320 360,300 400,312 M470,340 C520,360 640,390 745,421 C800,440 900,460 905,420" fill="none" stroke="#b01c00" strokeWidth=".7" />

      {/* skylights */}
      <polygon points="462,257 587,285 525,342 398,313" fill="#e01408" />
      <polygon points="462,257 587,285 525,342 398,313" fill="none" stroke="#a82018" />
      <polygon points="463,272 570,296 522,340 412,316" fill="#ea2c28" />
      <polygon points="463,272 560,292 522,327 426,306" fill="#fefefe" />
      <polygon points="810,330 935,362 872,417 745,388" fill="#e01408" />
      <polygon points="810,330 935,362 872,417 745,388" fill="none" stroke="#a82018" />
      <polygon points="812,340 922,366 871,412 761,385" fill="#ea2c28" />
      <polygon points="812,348 907,369 870,403 773,382" fill="#fefefe" />
      <path d="M795,351 L812,348 V357 L868,366 M812,357 L840,360" fill="none" stroke="#2a3ae0" />
    </g>

    {/* axis cross in the model */}
    <path d="M927,492 L943,476" stroke="#18e018" strokeWidth="2" />
    <polygon points="940,474 948,471 945,480" fill="#18c018" />
    <path d="M927,492 V520" stroke="#1a1ae0" strokeWidth="1.6" />
    <polygon points="924,518 930,518 927,527" fill="#1a1ae0" />
    <path d="M895,490 L927,492" stroke="#e01010" />
    <text x="945" y="476" fontSize="9" fill="#18d018" fontFamily="Liberation Sans">Y</text>
    <text x="924" y="540" fontSize="9" fill="#1a1ae0" fontFamily="Liberation Sans">Z</text>
    <text x="912" y="504" fontSize="13" fill="#f01010" fontFamily="Liberation Sans">-4</text>

    {/* red peak arrow */}
    <path d="M1157,422 L1177,442" stroke="#f81010" strokeWidth="5" />
    <polygon points="1181,429 1183,448 1164,444" fill="#f81010" />

    {/* values */}
    <text x="1082" y="316" fontSize="14" fill="#f01818" fontFamily="Liberation Sans">-16.14</text>
    <text x="1105" y="343" fontSize="14" fill="#1a1ae0" fontFamily="Liberation Sans">0.23</text>
    <text x="709" y="363" fontSize="14" fill="#1a1ae0" fontFamily="Liberation Sans">18.81</text>
    <text x="1135" y="557" fontSize="14" fill="#1a1ae0" fontFamily="Liberation Sans">10.03</text>
    <text x="392" y="193" fontSize="13" fill="#e8202c" fontFamily="Liberation Sans">-5.18</text>

    {/* global axes */}
    <path d="M81,587 L50,581" stroke="#d81010" strokeWidth="1.6" />
    <polygon points="45,580 55,577 54,584" fill="#a01010" />
    <path d="M81,587 L97,570" stroke="#18d018" strokeWidth="1.6" />
    <polygon points="100,567 90,570 95,576" fill="#18a018" />
    <path d="M81,587 V618" stroke="#1a1ae0" strokeWidth="2" />
    <polygon points="77,614 85,614 81,624" fill="#10106a" />
    <text x="33" y="581" fontSize="9" fill="#e01010" fontFamily="Liberation Sans">X</text>
    <text x="100" y="572" fontSize="9" fill="#18c018" fontFamily="Liberation Sans">Y</text>
    <text x="78" y="636" fontSize="9" fill="#1a1ae0" fontFamily="Liberation Sans">Z</text>
  </svg>
);

export default function App() {
  return (
    <div className="flex h-[1050px] w-[1399px] flex-col overflow-hidden bg-[#cfd4de] text-[#222] [font-family:'Liberation_Sans',sans-serif]">
      <div className="flex h-[31px] shrink-0 items-center border-t border-[#6a6a6a] bg-white pl-[9px]">
        <svg width="18" height="18" viewBox="0 0 18 18">
          <path d="M2 5l7-4 7 4v9l-7 3-7-3z" fill="#7a7e84" stroke="#3a3c40" />
          <path d="M2 5l7 3 7-3-7-4z" fill="#b8bcc2" />
          <path d="M9 8v8l-7-3V5z" fill="#8a6c20" />
          <text x="3" y="15" fontSize="10" fontWeight="700" fontFamily="Liberation Sans" fill="#f2d040">5</text>
        </svg>
        <span className="ml-[3px] text-[12px] tracking-[-0.35px] text-black [font-family:'Noto_Sans',sans-serif]">RFEM 5.26.02 x64 - [RFEM-Beispiel-04*]</span>
        <div className="ml-auto flex text-black">
          <span className="flex w-[46px] justify-center">
            <Minus size={13} strokeWidth={1.2} />
          </span>
          <span className="flex w-[46px] justify-center">
            <Square size={11} strokeWidth={1.3} />
          </span>
          <span className="flex w-[46px] justify-center">
            <X size={14} strokeWidth={1.1} />
          </span>
        </div>
      </div>

      <div className="flex h-[23px] shrink-0 items-center pl-[5px] pt-[3px] text-[11px] text-[#5b6372] [font-family:'Noto_Sans',sans-serif]">
        <Grip w="w-[6px]" />
        <svg width="17" height="14" viewBox="0 0 17 14" className="ml-px">
          <rect width="17" height="14" fill="#16325f" />
          <path d="M1 9h15M8 1L3 9M8 1l5 8M8 1v12" stroke="#fff" strokeWidth="1.1" fill="none" />
        </svg>
        <div className="ml-[8px] flex">
          {menu.map((m) => (
            <MenuItem key={m} t={m} />
          ))}
        </div>
        <div className="ml-auto flex items-center gap-[6px] pr-[3px] text-[#8b909c]">
          <Minus size={10} strokeWidth={2} />
          <Square size={9} strokeWidth={1.6} />
          <X size={12} strokeWidth={2} />
        </div>
      </div>

      <Row1 />
      <Row2 />

      <div className="flex h-[921px] shrink-0">
        <div className="w-[25px] shrink-0 pl-[2px] pt-[2px]">
          <div className="flex h-[187px] w-[20px] items-start justify-start bg-gradient-to-r from-[#fff4cf] to-[#fbd16c] pr-[2px] pt-[3px] text-[12px] tracking-[-0.1px] text-[#555] [writing-mode:vertical-rl] [font-family:'Noto_Sans',sans-serif]">
            Navigátor projektu - Výsledky
          </div>
        </div>
        <div className="flex w-[1350px] shrink-0 flex-col">
          <div className="relative h-[578px] shrink-0 overflow-hidden border-l border-r border-t border-[#8a8a8a] bg-[#fefefe]">
            <Scene />
            <div className="absolute left-[4px] top-[5px] text-[11px] leading-[14px] tracking-[-0.15px] text-black">
              <div>Pruty: Vnitřní síly M-y [kNm]</div>
              <div>Plochy: Základní vnitřní síly m-x [kNm/m]</div>
              <div>ZS1 : Eigengewicht</div>
            </div>
            <div className="absolute bottom-[6px] left-[4px] text-[11px] leading-[14px] tracking-[-0.2px] text-black">
              <div>Max M-y: 18.81, Min M-y: -16.14 kNm</div>
              <div>Max m-x: 3.22, Min m-x: -7.99 kNm/m</div>
            </div>
          </div>
          <div className="h-[5px] shrink-0" />
          <div className="flex flex-1 flex-col border-l border-[#8a8a8a] bg-gradient-to-b from-[#e9edf6] via-[#e9edf6] to-[#d8dbe3]">
            <div className="flex h-[20px] shrink-0 items-center justify-between pl-[2px] pr-[3px] text-[11px] text-[#4a4e58] [font-family:'Noto_Sans',sans-serif]">
              <span>4.15 Plochy - základní vnitřní síly</span>
              <span className="flex items-center gap-[7px]">
                <span className="text-[10px] leading-none">⊥</span>
                <X size={12} strokeWidth={1.4} />
              </span>
            </div>
            <TableBar />
            <Grid />
            <Tabs />
            <div className="flex-1 bg-[#f0f0f0]" />
          </div>
        </div>
        <div className="w-[24px] shrink-0 pl-[3px] pt-[3px]">
          <div className="flex h-[38px] w-[18px] items-start justify-start bg-gradient-to-r from-[#fff4cf] to-[#fbd16c] pt-[3px] text-[12px] text-[#555] [writing-mode:vertical-rl] [font-family:'Noto_Sans',sans-serif]">
            Panel
          </div>
        </div>
      </div>

      <div className="flex h-[21px] shrink-0 items-center whitespace-nowrap border-t border-[#9a9a9a] bg-gradient-to-b from-[#e8e8e8] via-[#bcbcbc] to-[#a8a8a8] text-[12px] tracking-[-0.45px] text-[#333]">
        <span className="w-[611px] shrink-0 pl-[5px]">Pracovní rovina</span>
        {[
          ["UCHOP", "w-[46px]"],
          ["RASTR", "w-[44px]"],
          ["KARTEZ", "w-[51px]"],
          ["OUCHOP", "w-[56px]"],
          ["VLINIE", "w-[42px]"],
          ["DXF", "w-[30px]"],
        ].map(([t, w]) => (
          <span key={t} className={"flex h-[19px] shrink-0 items-center justify-center border border-b-white border-l-[#333] border-r-white border-t-[#333] text-[#222] " + w}>
            {t}
          </span>
        ))}
        <span className="w-[104px] shrink-0" />
        <span className="w-[89px] shrink-0">SS: Globální XYZ</span>
        <span className="w-[87px] shrink-0">Rovina: XY</span>
        <span className="w-[76px] shrink-0">X: -1.816 m</span>
        <span className="w-[73px] shrink-0">Y: 3.334 m</span>
        <span>Z: 0.000 m</span>
      </div>
    </div>
  );
}
